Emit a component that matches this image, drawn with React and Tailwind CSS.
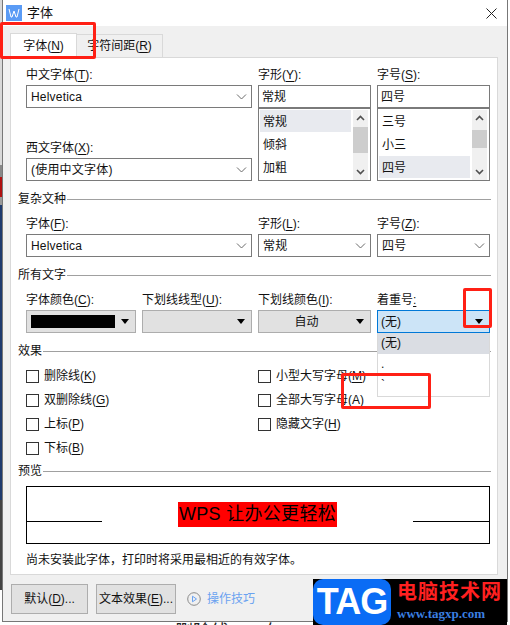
function Mn({ children }) {
  return <span className="underline underline-offset-2">{children}</span>;
}

function Label({ text, k }) {
  return (
    <div className="h-[18px] leading-[16px] text-[12px] whitespace-nowrap">
      {text}
      {k ? (
        <>
          (<Mn>{k}</Mn>):
        </>
      ) : (
        <Mn>:</Mn>
      )}
    </div>
  );
}

function Chevron() {
  return (
    <svg width="11" height="6" viewBox="0 0 11 6" fill="none" stroke="#6b6b6b" strokeWidth="1">
      <path d="M1 0.5l4.5 4.5 4.5-4.5" />
    </svg>
  );
}

function Select({ value }) {
  return (
    <div className="h-[23px] border border-[#7a7a7a] bg-white flex items-center justify-between pl-[4px] pr-[4px] text-[12px]">
      <span className="tracking-[0.2px]">{value}</span>
      <Chevron />
    </div>
  );
}

function Caret() {
  return (
    <svg width="8" height="5" viewBox="0 0 8 5" fill="#000">
      <path d="M0 0h8l-4 5z" />
    </svg>
  );
}

function ColorSelect({ children }) {
  return (
    <div className="h-[23px] border border-[#adadad] bg-[#e1e1e1] flex items-center pl-[4px] pr-[6px] text-[12px]">
      <div className="flex-1 flex items-center justify-center">{children}</div>
      <span className="ml-[6px]">
        <Caret />
      </span>
    </div>
  );
}

function ListBox({ items, active, thumbClass }) {
  return (
    <div className="h-[73px] border border-[#7a7a7a] bg-white flex pl-px pt-[1px] text-[12px]">
      <div className="flex-1 flex flex-col">
        {items.map((item, i) => (
          <div key={item} className={`h-[22px] mb-px leading-[24px] pl-[3px] ${i === active ? "bg-[#e8eaef]" : ""}`}>
            {item}
          </div>
        ))}
      </div>
      <div className="w-[15px] mx-[2px] bg-[#f0f0f0] flex flex-col items-center justify-between">
        <div className="h-[16px] flex items-center">
          <svg width="9" height="6" viewBox="0 0 9 6" fill="none" stroke="#505050" strokeWidth="1.6">
            <path d="M1 5l3.5-3.5 3.5 3.5" />
          </svg>
        </div>
        <div className={`w-full bg-[#cdcdcd] ${thumbClass}`} />
        <div className="flex-1" />
        <div className="h-[16px] flex items-center">
          <svg width="9" height="6" viewBox="0 0 9 6" fill="none" stroke="#505050" strokeWidth="1.6">
            <path d="M1 1l3.5 3.5 3.5-3.5" />
          </svg>
        </div>
      </div>
    </div>
  );
}

function Legend({ title, className = "" }) {
  return (
    <div className={`h-[16px] flex items-center gap-px text-[12px] ${className}`}>
      <span>{title}</span>
      <div className="flex-1 h-px bg-[#a0a0a0]" />
    </div>
  );
}

function Check({ text, k }) {
  return (
    <div className="h-[24px] flex items-center gap-[5px] text-[12px]">
      <div className="w-[13px] h-[13px] border border-[#333] bg-white" />
      <span>
        {text}(<Mn>{k}</Mn>)
      </span>
    </div>
  );
}

export default function App() {
  return (
    <div className="relative w-[510px] h-[625px] overflow-hidden flex bg-white text-[#111] font-['Liberation_Sans','Noto_Sans_CJK_SC',sans-serif]">
      <div className="w-[2px] flex flex-col shrink-0">
        <div className="h-[165px] bg-[#d8d8d8]" />
        <div className="h-[12px] bg-[#888]" />
        <div className="h-[20px] bg-[#b01010]" />
        <div className="h-[8px] bg-[#999]" />
        <div className="h-[295px] bg-[#1e3a6e]" />
        <div className="h-[90px] bg-[#444]" />
      </div>

      <div className="w-[506px] shrink-0">
        <div className="h-[622px] border border-t-0 border-[#777] bg-[#f0f0f0] flex flex-col">
          {/* title bar */}
          <div className="h-[26px] bg-white flex items-center pl-[3px] text-[12px] shrink-0">
            <div className="w-[16px] h-[16px] bg-[#5a9bf5] flex items-center justify-center">
              <svg width="12" height="10" viewBox="0 0 12 10" fill="none" stroke="#fff" strokeWidth="1">
                <path d="M1 1l2 8h1l2-6 2 6h1l2-8" />
              </svg>
            </div>
            <span className="ml-[5px] text-[13px]">字体</span>
            <svg className="ml-auto mr-[10px]" width="11" height="11" viewBox="0 0 11 11" stroke="#222" strokeWidth="1">
              <path d="M0.5 0.5l10 10M10.5 0.5l-10 10" />
            </svg>
          </div>

          {/* tabs */}
          <div className="h-[31px] flex items-end pl-[7px] shrink-0 text-[12px]">
            <div className="w-[67px] h-[25px] -mb-px z-10 bg-white border border-b-0 border-[#d9d9d9] flex items-center justify-center">
              <span>
                字体(<Mn>N</Mn>)
              </span>
            </div>
            <div className="w-[86px] h-[23px] border border-l-0 border-b-0 border-[#d9d9d9] flex items-center justify-center">
              <span>
                字符间距(<Mn>R</Mn>)
              </span>
            </div>
          </div>

          {/* panel */}
          <div className="ml-[7px] w-[488px] h-[518px] bg-white border border-[#d9d9d9] pl-[7px] pr-[6px] pt-[9px] shrink-0">
            <div className="pl-[8px] grid grid-cols-[226px_113px_113px] gap-x-[6px]">
              <div>
                <Label text="中文字体" k="T" />
                <Select value="Helvetica" />
                <div className="mt-[32px]">
                  <Label text="西文字体" k="X" />
                  <Select value="(使用中文字体)" />
                </div>
              </div>
              <div>
                <Label text="字形" k="Y" />
                <div className="h-[23px] border border-[#7a7a7a] flex items-center pl-[3px] text-[12px]">常规</div>
                <ListBox items={["常规", "倾斜", "加粗"]} active={0} thumbClass="h-[26px] mt-px" />
              </div>
              <div>
                <Label text="字号" k="S" />
                <div className="h-[23px] border border-[#7a7a7a] flex items-center pl-[3px] text-[12px]">四号</div>
                <ListBox items={["三号", "小三", "四号"]} active={2} thumbClass="h-[18px] mt-[4px]" />
              </div>
            </div>

            <Legend title="复杂文种" className="mt-[10px]" />
            <div className="mt-[9px] pl-[8px] grid grid-cols-[226px_113px_113px] gap-x-[6px]">
              <div>
                <Label text="字体" k="F" />
                <Select value="Helvetica" />
              </div>
              <div>
                <Label text="字形" k="L" />
                <Select value="常规" />
              </div>
              <div>
                <Label text="字号" k="Z" />
                <Select value="四号" />
              </div>
            </div>

            <Legend title="所有文字" className="mt-[10px]" />
            <div className="mt-[9px] pl-[8px] grid grid-cols-[110px_110px_113px_113px] gap-x-[6px]">
              <div>
                <Label text="字体颜色" k="C" />
                <ColorSelect>
                  <div className="w-full h-[13px] bg-black" />
                </ColorSelect>
              </div>
              <div>
                <Label text="下划线线型" k="U" />
                <ColorSelect />
              </div>
              <div>
                <Label text="下划线颜色" k="I" />
                <ColorSelect>自动</ColorSelect>
              </div>
              <div className="relative">
                <Label text="着重号" />
                <div className="h-[23px] border border-[#0078d7] bg-[#cce4f7] flex items-center justify-between pl-[3px] pr-[6px] text-[12px]">
                  <span>(无)</span>
                  <Caret />
                </div>
                {/* open dropdown */}
                <div className="absolute left-0 right-0 top-[41px] z-20 bg-white border border-t-0 border-[#d9d9d9] text-[12px]">
                  <div className="h-[21px] leading-[21px] pl-[3px] bg-[#dadde3]">(无)</div>
                  <div className="h-[21px] leading-[21px] pl-[3px]">.</div>
                  <div className="h-[21px] leading-[21px] pl-[3px]">`</div>
                </div>
              </div>
            </div>

            <Legend title="效果" className="mt-[10px]" />
            <div className="mt-[5px] pl-[8px] h-[96px] grid grid-cols-[232px_1fr]">
              <div>
                <Check text="删除线" k="K" />
                <Check text="双删除线" k="G" />
                <Check text="上标" k="P" />
                <Check text="下标" k="B" />
              </div>
              <div>
                <Check text="小型大写字母" k="M" />
                <Check text="全部大写字母" k="A" />
                <Check text="隐藏文字" k="H" />
              </div>
            </div>

            <Legend title="预览" className="mt-[3px]" />
            <div className="mt-[7px] ml-[8px] w-[464px] h-[58px] border border-black flex items-center">
              <div className="w-[75px] h-px bg-black mt-[13px]" />
              <div className="flex-1 flex justify-center mt-[-1px]">
                <span className="w-[159px] h-[25px] bg-[#ff0000] text-black text-[18px] leading-[25px] tracking-[0.3px] text-center whitespace-nowrap">
                  WPS 让办公更轻松
                </span>
              </div>
              <div className="w-[76px] h-px bg-black mt-[13px]" />
            </div>
            <div className="mt-[7px] ml-[8px] h-[18px] leading-[18px] text-[12px]">
              尚未安装此字体，打印时将采用最相近的有效字体。
            </div>
          </div>

          {/* bottom bar */}
          <div className="flex items-center pl-[8px] pt-[9px] text-[12px]">
            <div className="w-[77px] h-[30px] bg-[#e1e1e1] border border-[#adadad] flex items-center justify-center">
              <span>
                默认(<Mn>D</Mn>)...
              </span>
            </div>
            <div className="ml-[8px] w-[80px] h-[30px] bg-[#e1e1e1] border border-[#adadad] flex items-center justify-center">
              <span>
                文本效果(<Mn>E</Mn>)...
              </span>
            </div>
            <svg className="ml-[11px]" width="14" height="14" viewBox="0 0 14 14" fill="none">
              <circle cx="7" cy="7" r="6.3" stroke="#8a8a8a" />
              <path d="M5.5 4.2v5.6l4-2.8z" stroke="#6aa2f0" />
            </svg>
            <span className="ml-[6px] text-[#6aa2f0]">操作技巧</span>
          </div>
        </div>
        <div className="h-[3px] overflow-hidden pl-[173px] text-[18px] leading-[20px] text-[#222] whitespace-nowrap">
          删除线 (A) 在
        </div>
      </div>

      {/* annotations */}
      <div className="absolute left-0 top-[22px] w-[96px] h-[37px] border-[3px] border-[#ff2015] rounded-[2px] z-30" />
      <div className="absolute left-[463px] top-[288px] w-[29px] h-[40px] border-[3px] border-[#ff2015] rounded-[2px] z-30" />
      <div className="absolute left-[341px] top-[373px] w-[90px] h-[36px] border-[3px] border-[#ff2015] rounded-[2px] z-30" />

      {/* watermark */}
      <div className="absolute left-[313px] top-[579px] w-[194px] h-[46px] bg-black flex z-30">
        <div className="w-[78px] h-[46px] bg-[#0a6cf5] rounded-[10px] text-white text-[36px] leading-[46px] font-bold tracking-[-1px] text-center">
          TAG
        </div>
        <div className="ml-[6px] flex flex-col">
          <div className="text-[#ff2020] text-[20px] leading-[26px] font-bold tracking-[1px] whitespace-nowrap">电脑技术网</div>
          <div className="text-[#3a7fe0] text-[13px] leading-[18px] font-bold font-['Liberation_Serif',serif] whitespace-nowrap">
            www.tagxp.com
          </div>
        </div>
      </div>
    </div>
  );
}
